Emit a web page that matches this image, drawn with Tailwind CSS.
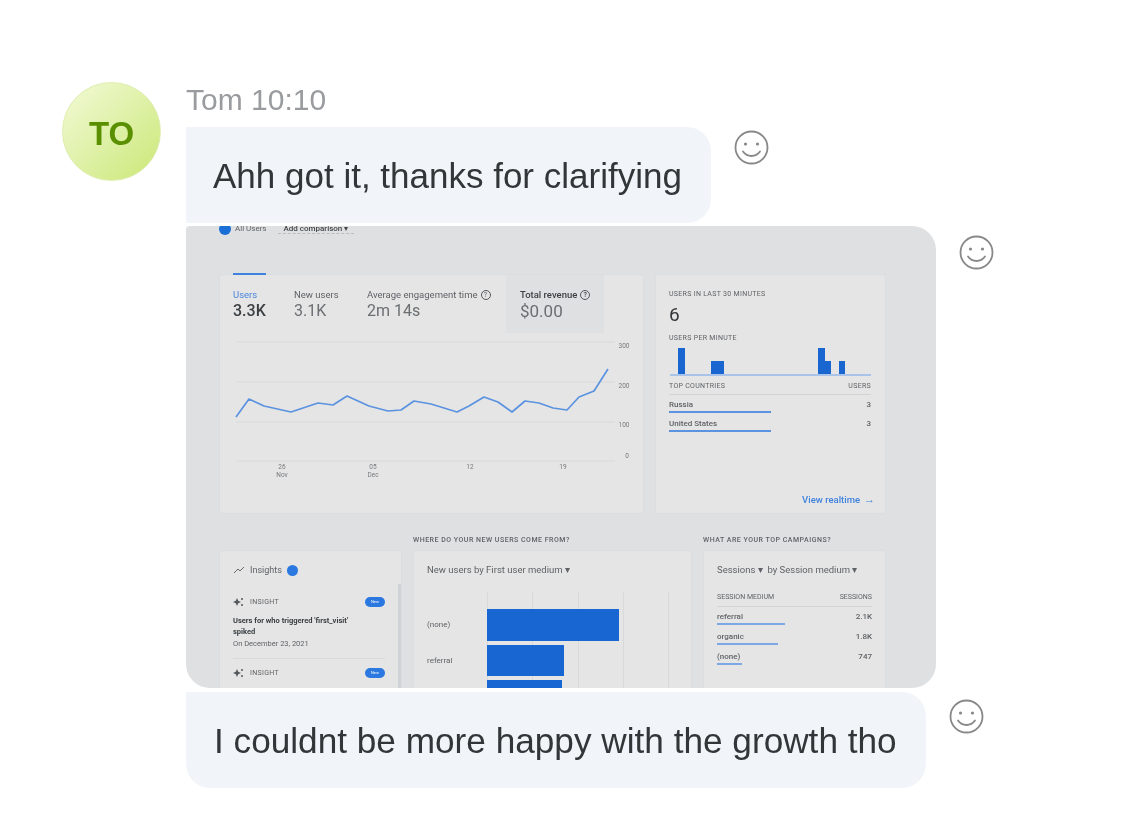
<!DOCTYPE html>
<html><head><meta charset="utf-8"><script src="https://cdn.jsdelivr.net/npm/@tailwindcss/browser@4"></script></head>
<body class="bg-white">
<div class="w-[1144px] h-[840px] overflow-hidden bg-white font-['Liberation_Sans',sans-serif] blur-[0.7px]">
<div class="flex gap-[25px] pl-[62px] pt-[82px]">
  <div class="w-[99px] h-[99px] shrink-0 rounded-full border border-[#dfeeb0] bg-gradient-to-br from-[#f3fad6] to-[#cbe774] flex items-center justify-center pt-[5px] text-[33px] font-bold text-[#5a9000]">TO</div>
  <div class="flex flex-col">
    <div class="text-[30px] leading-[36px] text-[#999b9e] h-[45px]">Tom 10:10</div>
    <div class="flex items-start gap-[23px]">
      <div class="h-[96px] w-[525px] flex items-center pl-[27px] pt-[3px] bg-[#f1f5f9] rounded-r-[24px] text-[35px] text-[#333639] whitespace-nowrap">Ahh got it, thanks for clarifying</div>
      <svg class="mt-[3px]" width="35" height="35" viewBox="0 0 35 35" fill="none" stroke="#888" stroke-width="1.8"><circle cx="17.5" cy="17.5" r="16"/><circle cx="11.5" cy="14" r="1.6" fill="#888" stroke="none"/><circle cx="23.5" cy="14" r="1.6" fill="#888" stroke="none"/><path d="M9 21.5c2.500 3.500 5.500 4.500 8.500 4.500s6-1 8.500-4.500" stroke-linecap="round"/></svg>
    </div>
    <div class="flex items-start gap-[23px] mt-[3px]">
      <div class="w-[750px] h-[462px] shrink-0 overflow-hidden bg-[#dfe0e2] rounded-tr-[24px] rounded-b-[24px] rounded-tl-[4px] pl-[33px] pr-[50px] font-['Roboto',sans-serif] text-[#5f6266] blur-[0.4px]">
        <div class="h-[49px] flex items-start gap-[8px] text-[8px] -mt-[1px]">
          <div class="flex items-center gap-[4px] h-[10px] -mt-[1px]"><span class="w-[12px] h-[12px] rounded-full bg-[#1a6fd6]"></span><span>All Users</span></div>
          <div class="h-[10px] px-[6px] -mt-[1px] ml-[3px] flex items-center font-medium text-[#44474a] border-b border-dashed border-[#b9bbbf]">Add comparison ▾</div>
        </div>
        <div class="flex gap-[11px] h-[240px]">
          <div class="w-[425px] bg-[#e5e5e5] rounded-[3px] border border-[#dcdddf] relative">
            <div class="flex h-[58px]">
              <div class="w-[74px] pl-[13px] pt-[15px]"><div class="text-[9.5px] leading-[10px] text-[#4a86dc]">Users</div><div class="text-[16px] leading-[22px] font-medium text-[#3c4043]">3.3K</div></div>
              <div class="w-[73px] pt-[15px]"><div class="text-[9.5px] leading-[10px]">New users</div><div class="text-[16px] leading-[22px] text-[#6b6e72]">3.1K</div></div>
              <div class="w-[139px] pt-[15px]"><div class="text-[9.5px] leading-[10px] flex items-center gap-[3px] whitespace-nowrap">Average engagement time <span class="w-[10px] h-[10px] rounded-full border border-[#55585c] text-[7px] flex items-center justify-center">?</span></div><div class="text-[16px] leading-[22px] text-[#6b6e72]">2m 14s</div></div>
              <div class="w-[98px] pl-[14px] pt-[15px] bg-[#dfe0e2]"><div class="text-[9.5px] leading-[10px] font-medium text-[#3c4043] flex items-center gap-[3px] whitespace-nowrap">Total revenue <span class="w-[10px] h-[10px] rounded-full border border-[#55585c] text-[7px] flex items-center justify-center">?</span></div><div class="text-[17px] leading-[22px] text-[#6b6e72]">$0.00</div></div>
            </div>
            <div class="absolute left-[13px] -top-[2px] w-[33px] h-[2px] bg-[#3f82de]"></div>
            <svg class="block" width="423" height="160" viewBox="220 334 423 160" fill="none" font-size="6.500" style="font-family:Roboto,sans-serif">
              <g stroke="#d8d9da"><path d="M236 343H615M236 383H615M236 423H615M236 462H615"/></g>
              <path d="M236 418L249 400L264 407L291 413L318 404L333 406L347 397L369 407L388 412L401 411L414 402L431 405L457 413L469 407L484 398L498 403L512 413L525 402L539 404L553 409L567 411L579 398L594 392L608 370" stroke="#5b93e0" stroke-width="1.7" stroke-linejoin="round"/>
              <g fill="#777a7e" stroke="none" text-anchor="middle"><text x="282" y="470">26</text><text x="282" y="478">Nov</text><text x="373" y="470">05</text><text x="373" y="478">Dec</text><text x="470" y="470">12</text><text x="563" y="470">19</text><text x="624" y="349">300</text><text x="624" y="389">200</text><text x="624" y="428">100</text><text x="627" y="459">0</text></g>
            </svg>
          </div>
          <div class="w-[231px] bg-[#e5e5e5] rounded-[3px] border border-[#dcdddf] pl-[13px] pr-[14px] pt-[15px] flex flex-col text-[7px]">
            <div class="leading-[8px] tracking-[0.3px]">USERS IN LAST 30 MINUTES</div>
            <div class="text-[19px] leading-[24px] mt-[5px] text-[#34373a]">6</div>
            <div class="leading-[8px] tracking-[0.3px] mt-[7px]">USERS PER MINUTE</div>
            <div class="h-[26px] mt-[8px] border-b-2 border-[#a9c4e8] flex items-end ml-[1px]">
              <span class="w-[7px] h-[26px] ml-[8px] bg-[#1a66d0]"></span><span class="w-[13px] h-[13px] ml-[26px] bg-[#1a66d0]"></span><span class="w-[7px] h-[26px] ml-[94px] bg-[#1a66d0]"></span><span class="w-[6px] h-[13px] bg-[#1a66d0]"></span><span class="w-[6px] h-[13px] ml-[8px] bg-[#1a66d0]"></span>
            </div>
            <div class="flex justify-between leading-[8px] mt-[6px] tracking-[0.3px]"><span>TOP COUNTRIES</span><span>USERS</span></div>
            <div class="border-t border-[#d2d3d5] mt-[4px] pt-[6px] flex justify-between leading-[8px] text-[8px] font-medium"><span>Russia</span><span>3</span></div>
            <div class="h-[2px] w-[102px] bg-[#5b93e0] mt-[2px]"></div>
            <div class="pt-[7px] flex justify-between leading-[8px] text-[8px] font-medium"><span>United States</span><span>3</span></div>
            <div class="h-[2px] w-[102px] bg-[#5b93e0] mt-[2px]"></div>
            <div class="mt-[63px] -mr-[4px] flex justify-end items-center gap-[4px] text-[9.5px] leading-[10px] text-[#3f82de] font-medium"><span>View realtime</span><span class="text-[11px]">→</span></div>
          </div>
        </div>
        <div class="flex gap-[11px] mt-[22px] text-[7px] leading-[8px] tracking-[0.5px] font-medium"><span class="w-[183px]"></span><span class="w-[279px]">WHERE DO YOUR NEW USERS COME FROM?</span><span>WHAT ARE YOUR TOP CAMPAIGNS?</span></div>
        <div class="flex gap-[11px] mt-[6px] h-[140px] text-[7px] leading-[8px]">
          <div class="w-[183px] bg-[#e5e5e5] rounded-t-[3px] border border-[#dcdddf] pl-[13px] pr-[16px] pt-[13px] relative overflow-hidden">
            <div class="flex items-center gap-[5px] text-[9px] leading-[12px]"><svg width="12" height="8" viewBox="0 0 12 8" fill="none" stroke="#66696d"><path d="M1 7L5 3L7 5L11 1"/></svg><span>Insights</span><span class="w-[11px] h-[11px] rounded-full bg-[#2a78e0]"></span></div>
            <div class="flex items-center mt-[22px] h-[8px] justify-between"><div class="flex items-center gap-[6px] tracking-[0.3px]"><svg width="11" height="10" viewBox="0 0 11 10" fill="#55585c"><path d="M4 1L5.200 3.800L8 5L5.200 6.200L4 9L2.800 6.200L0 5L2.800 3.800Z"/><circle cx="9" cy="2" r="1"/><circle cx="9" cy="8" r="1"/></svg><span>INSIGHT</span></div><span class="w-[20px] h-[10px] rounded-full bg-[#2a78e0] text-[4px] text-white flex items-center justify-center">New</span></div>
            <div class="mt-[9px] text-[7.5px] leading-[11px] font-bold text-[#3c4043]">Users for who triggered 'first_visit'<br>spiked</div>
            <div class="mt-[3px] text-[7.5px]">On December 23, 2021</div>
            <div class="border-t border-[#d8d9db] mt-[10px]"></div>
            <div class="flex items-center mt-[10px] h-[8px] justify-between"><div class="flex items-center gap-[6px] tracking-[0.3px]"><svg width="11" height="10" viewBox="0 0 11 10" fill="#55585c"><path d="M4 1L5.200 3.800L8 5L5.200 6.200L4 9L2.800 6.200L0 5L2.800 3.800Z"/><circle cx="9" cy="2" r="1"/><circle cx="9" cy="8" r="1"/></svg><span>INSIGHT</span></div><span class="w-[20px] h-[10px] rounded-full bg-[#2a78e0] text-[4px] text-white flex items-center justify-center">New</span></div>
            <div class="absolute right-0 top-[33px] bottom-0 w-[3px] bg-[#cfd2d6]"></div>
          </div>
          <div class="w-[279px] bg-[#e5e5e5] rounded-t-[3px] border border-[#dcdddf] pl-[13px] pt-[13px] relative overflow-hidden">
            <span class="absolute top-[41px] bottom-0 left-[73px] w-px bg-[#d8d9da]"></span>
            <span class="absolute top-[41px] bottom-0 left-[118px] w-px bg-[#d8d9da]"></span>
            <span class="absolute top-[41px] bottom-0 left-[164px] w-px bg-[#d8d9da]"></span>
            <span class="absolute top-[41px] bottom-0 left-[209px] w-px bg-[#d8d9da]"></span>
            <span class="absolute top-[41px] bottom-0 left-[254px] w-px bg-[#d8d9da]"></span>
            <div class="text-[9.5px] leading-[12px]">New users by First user medium ▾</div>
            <div class="relative flex items-center mt-[33px] text-[8px]"><span class="w-[60px]">(none)</span><span class="w-[132px] h-[32px] bg-[#1766d2]"></span></div>
            <div class="relative flex items-center mt-[4px] text-[8px]"><span class="w-[60px]">referral</span><span class="w-[77px] h-[31px] bg-[#1766d2]"></span></div>
            <div class="relative flex items-center mt-[4px]"><span class="w-[60px]"></span><span class="w-[75px] h-[31px] bg-[#1766d2]"></span></div>
          </div>
          <div class="w-[183px] bg-[#e5e5e5] rounded-t-[3px] border border-[#dcdddf] px-[13px] pt-[13px]">
            <div class="text-[9.5px] leading-[12px] whitespace-nowrap">Sessions ▾ &nbsp;by Session medium ▾</div>
            <div class="flex justify-between mt-[17px] whitespace-nowrap"><span>SESSION MEDIUM</span><span>SESSIONS</span></div>
            <div class="border-t border-[#d2d3d5] mt-[5px] pt-[6px] flex justify-between text-[8px] font-medium"><span>referral</span><span>2.1K</span></div>
            <div class="h-[2px] w-[68px] bg-[#7ea8e4] mt-[2px]"></div>
            <div class="pt-[8px] flex justify-between text-[8px] font-medium"><span>organic</span><span>1.8K</span></div>
            <div class="h-[2px] w-[61px] bg-[#7ea8e4] mt-[2px]"></div>
            <div class="pt-[8px] flex justify-between text-[8px] font-medium"><span>(none)</span><span>747</span></div>
            <div class="h-[2px] w-[25px] bg-[#7ea8e4] mt-[2px]"></div>
          </div>
        </div>
      </div>
      <svg class="mt-[9px]" width="35" height="35" viewBox="0 0 35 35" fill="none" stroke="#888" stroke-width="1.8"><circle cx="17.5" cy="17.5" r="16"/><circle cx="11.5" cy="14" r="1.6" fill="#888" stroke="none"/><circle cx="23.5" cy="14" r="1.6" fill="#888" stroke="none"/><path d="M9 21.5c2.500 3.500 5.500 4.500 8.500 4.500s6-1 8.500-4.500" stroke-linecap="round"/></svg>
    </div>
    <div class="flex items-start gap-[23px] mt-[4px]">
      <div class="h-[96px] w-[740px] flex items-center pl-[28px] pt-[2px] bg-[#f1f5f9] rounded-r-[24px] rounded-bl-[24px] text-[35.200px] text-[#333639] whitespace-nowrap">I couldnt be more happy with the growth tho</div>
      <svg class="mt-[7px]" width="35" height="35" viewBox="0 0 35 35" fill="none" stroke="#888" stroke-width="1.8"><circle cx="17.5" cy="17.5" r="16"/><circle cx="11.5" cy="14" r="1.6" fill="#888" stroke="none"/><circle cx="23.5" cy="14" r="1.6" fill="#888" stroke="none"/><path d="M9 21.5c2.500 3.500 5.500 4.500 8.500 4.500s6-1 8.500-4.500" stroke-linecap="round"/></svg>
    </div>
  </div>
</div>
</div>
</body></html>
